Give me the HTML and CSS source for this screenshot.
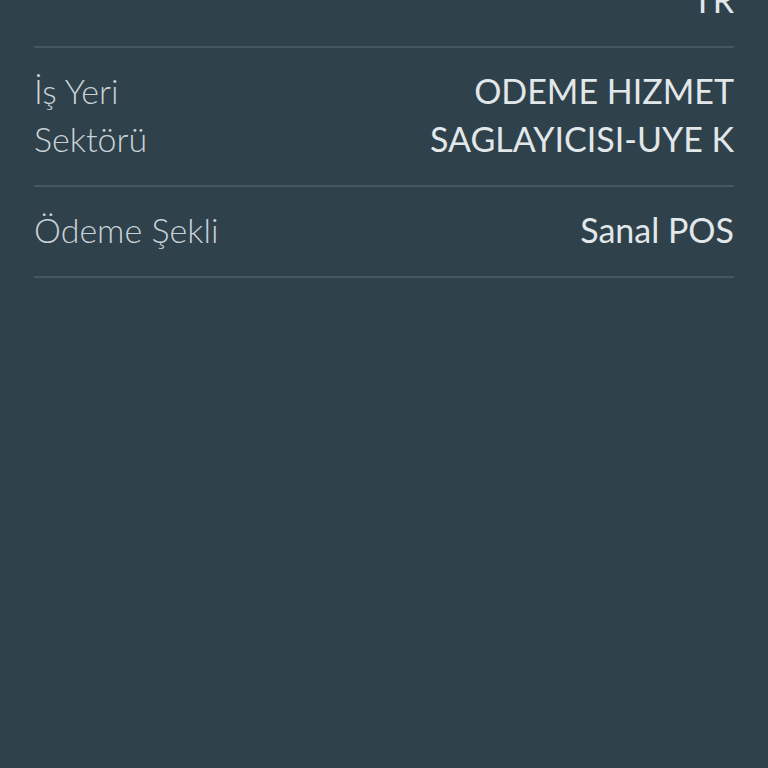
FILE: index.html
```html
<!DOCTYPE html><html>
<head>
<title>Ödeme Detayı</title>
<link rel="stylesheet" href="styles.css">
</head>
<body>
<div class='details'>
 <div class='row'>
  <div class='label'></div>
  <div class='value'>TR</div>
 </div>
 <div class='row'>
  <div class='label'>İş Yeri Sektörü</div>
  <div class='value'>ODEME HIZMET SAGLAYICISI-UYE K</div>
 </div>
 <div class='row'>
  <div class='label'>Ödeme Şekli</div>
  <div class='value'>Sanal POS</div>
 </div>
</div>
</body>
</html>
```

FILE: styles.css
```css
html, body { margin: 0; height: 100%; }
body { background-color: #2f414b; font-family: Lato, "Open Sans", sans-serif; font-size: 34px; line-height: 48px; overflow: hidden; }

.details { margin: -42px 34px 0 34px; }

.row { display: flex; justify-content: space-between; align-items: flex-start;
       padding-top: 18px; padding-bottom: 22px; border-bottom: solid 2px #46575f; }
.row + .row { padding-top: 19px; }

.label { width: 200px; font-weight: 300; color: #cad2d7; }
.value { max-width: 340px; text-align: right; font-weight: 400; color: #e2e7ea; }
```
